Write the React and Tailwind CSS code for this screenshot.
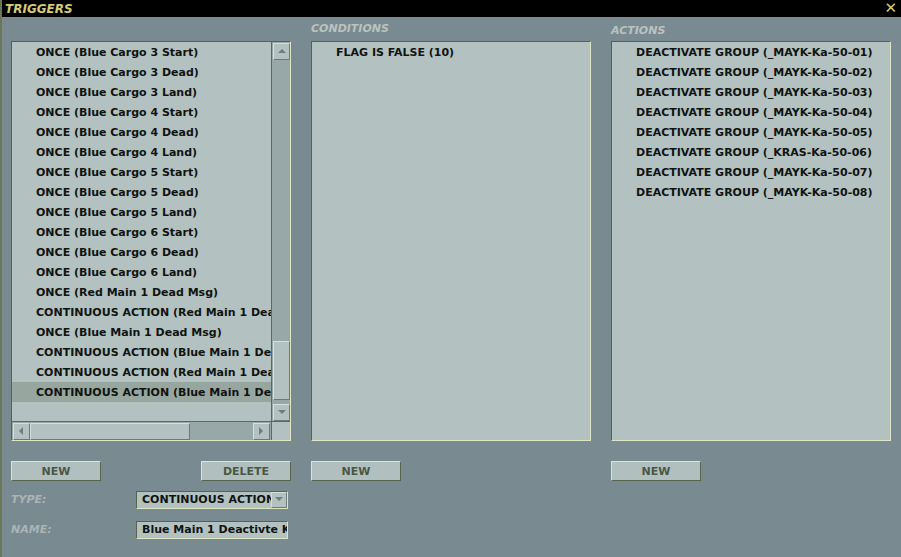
import React from 'react';

const triggers = [
    'ONCE (Blue Cargo 3 Start)',
    'ONCE (Blue Cargo 3 Dead)',
    'ONCE (Blue Cargo 3 Land)',
    'ONCE (Blue Cargo 4 Start)',
    'ONCE (Blue Cargo 4 Dead)',
    'ONCE (Blue Cargo 4 Land)',
    'ONCE (Blue Cargo 5 Start)',
    'ONCE (Blue Cargo 5 Dead)',
    'ONCE (Blue Cargo 5 Land)',
    'ONCE (Blue Cargo 6 Start)',
    'ONCE (Blue Cargo 6 Dead)',
    'ONCE (Blue Cargo 6 Land)',
    'ONCE (Red Main 1 Dead Msg)',
    'CONTINUOUS ACTION (Red Main 1 Dead Msg)',
    'ONCE (Blue Main 1 Dead Msg)',
    'CONTINUOUS ACTION (Blue Main 1 Deactivate)',
    'CONTINUOUS ACTION (Red Main 1 Deactivate)',
    'CONTINUOUS ACTION (Blue Main 1 Deactivte Ka-50)',
];

const actions = [
    'DEACTIVATE GROUP (_MAYK-Ka-50-01)',
    'DEACTIVATE GROUP (_MAYK-Ka-50-02)',
    'DEACTIVATE GROUP (_MAYK-Ka-50-03)',
    'DEACTIVATE GROUP (_MAYK-Ka-50-04)',
    'DEACTIVATE GROUP (_MAYK-Ka-50-05)',
    'DEACTIVATE GROUP (_KRAS-Ka-50-06)',
    'DEACTIVATE GROUP (_MAYK-Ka-50-07)',
    'DEACTIVATE GROUP (_MAYK-Ka-50-08)',
];

const font = { fontFamily: '"DejaVu Sans", Verdana, sans-serif' };

// small triangle glyph for scroll buttons
const Arrow = ({ dir }) => {
    const pts = {
        up: '1,6 5,2 9,6',
        down: '1,2 5,6 9,2',
        left: '6,1 2,5 6,9',
        right: '2,1 6,5 2,9',
    }[dir];
    return (
        <svg width="10" height="10" viewBox="0 0 10 10">
            <polygon points={pts} fill="#6f7d7d" />
        </svg>
    );
};

const ScrollBtn = ({ dir }) => (
    <div className="w-[17px] h-[17px] flex items-center justify-center bg-[#b3c1c1] border border-t-[#d6e0d8] border-l-[#d6e0d8] border-b-[#6d7a76] border-r-[#6d7a76]">
        <Arrow dir={dir} />
    </div>
);

const Button = ({ children }) => (
    <button className="block w-[90px] h-[20px] bg-[#b1bfbf] border border-t-[#dfe6c6] border-l-[#dfe6c6] border-b-[#56634f] border-r-[#56634f] text-[11px] font-bold text-[#4a5844] leading-none">
        {children}
    </button>
);

const Header = ({ children, className = '' }) => (
    <div className={`h-[24px] text-[11px] font-bold italic text-[#b9c3bf] ${className}`}>{children}</div>
);

const Panel = ({ children, className = '' }) => (
    <div className={`w-[280px] h-[400px] bg-[#b3c1c1] border border-t-[#56634f] border-l-[#56634f] border-b-[#dfe6c6] border-r-[#dfe6c6] ${className}`}>
        {children}
    </div>
);

const Row = ({ text, selected }) => (
    <div className={`h-[20px] pl-[24px] pt-[2px] flex items-center whitespace-nowrap overflow-hidden text-[11px] font-bold text-[#101410] ${selected ? 'bg-[#98a6a0]' : ''}`}>
        {text}
    </div>
);

export default function App() {
    return (
        <div className="w-[901px] h-[557px] bg-[#798a90] overflow-hidden flex flex-col border-l-2 border-[#6a7858]" style={font}>
            {/* title bar */}
            <div className="h-[17px] bg-black flex items-center justify-between pl-[3px] pr-[4px] -ml-[2px]">
                <span className="pl-[2px] text-[12px] font-bold italic text-[#d6cc76] leading-none">TRIGGERS</span>
                <span className="text-[15px] text-[#d6cc76] leading-none">✕</span>
            </div>

            <div className="flex gap-[20px] pl-[9px]">
                {/* triggers list */}
                <div className="flex flex-col">
                    <Header />
                    <Panel className="flex flex-col">
                        <div className="flex flex-1 min-h-0">
                            <div className="flex-1 min-w-0 overflow-hidden">
                                {triggers.map((t, i) => (
                                    <Row key={i} text={t} selected={i === triggers.length - 1} />
                                ))}
                            </div>
                            <div className="w-[19px] bg-[#98a7a7] border-l border-[#5d6a60] flex flex-col pt-[1px] pl-[1px]">
                                <ScrollBtn dir="up" />
                                <div className="flex-1 relative">
                                    <div className="absolute left-0 top-[281px] w-[17px] h-[59px] bg-[#b3c1c1] border border-t-[#d6e0d8] border-l-[#d6e0d8] border-b-[#6d7a76] border-r-[#6d7a76]" />
                                </div>
                                <ScrollBtn dir="down" />
                            </div>
                        </div>
                        <div className="h-[19px] flex border-t border-[#5d6a60]">
                            <div className="flex-1 bg-[#98a7a7] flex items-center pl-[1px] pr-[1px]">
                                <ScrollBtn dir="left" />
                                <div className="w-[160px] h-[17px] bg-[#b3c1c1] border border-t-[#d6e0d8] border-l-[#d6e0d8] border-b-[#6d7a76] border-r-[#6d7a76]" />
                                <div className="flex-1" />
                                <ScrollBtn dir="right" />
                            </div>
                            <div className="w-[19px] bg-[#b3c1c1] border-l border-[#5d6a60]" />
                        </div>
                    </Panel>
                    <div className="flex justify-between mt-[20px]">
                        <Button>NEW</Button>
                        <Button>DELETE</Button>
                    </div>
                    <div className="flex items-center justify-between mt-[10px] pr-[3px]">
                        <span className="text-[11px] font-bold italic text-[#a9b5b5]">TYPE:</span>
                        <div className="w-[152px] h-[18px] bg-[#b3c1c1] border border-t-[#56634f] border-l-[#56634f] border-b-[#dfe6c6] border-r-[#dfe6c6] flex items-center">
                            <span className="flex-1 pl-[5px] overflow-hidden whitespace-nowrap text-[11px] font-bold text-[#101410]">CONTINUOUS ACTION (Blue)</span>
                            <div className="w-[16px] h-[16px] flex items-center justify-center bg-[#b3c1c1] border border-t-[#d6e0d8] border-l-[#d6e0d8] border-b-[#6d7a76] border-r-[#6d7a76]">
                                <Arrow dir="down" />
                            </div>
                        </div>
                    </div>
                    <div className="flex items-center justify-between mt-[12px] pr-[3px]">
                        <span className="text-[11px] font-bold italic text-[#a9b5b5] pt-[1px]">NAME:</span>
                        <div className="w-[152px] h-[18px] bg-[#b3c1c1] border border-t-[#56634f] border-l-[#56634f] border-b-[#dfe6c6] border-r-[#dfe6c6] flex items-center overflow-hidden">
                            <span className="pl-[5px] whitespace-nowrap text-[11px] font-bold text-[#101410]">Blue Main 1 Deactivte Ka-50</span>
                        </div>
                    </div>
                </div>

                {/* conditions */}
                <div className="flex flex-col">
                    <Header className="pt-[4px]">CONDITIONS</Header>
                    <Panel>
                        <Row text="FLAG IS FALSE (10)" />
                    </Panel>
                    <div className="flex mt-[20px]">
                        <Button>NEW</Button>
                    </div>
                </div>

                {/* actions */}
                <div className="flex flex-col">
                    <Header className="pt-[6px]">ACTIONS</Header>
                    <Panel>
                        {actions.map((a, i) => (
                            <Row key={i} text={a} />
                        ))}
                    </Panel>
                    <div className="flex mt-[20px]">
                        <Button>NEW</Button>
                    </div>
                </div>
            </div>
        </div>
    );
}
